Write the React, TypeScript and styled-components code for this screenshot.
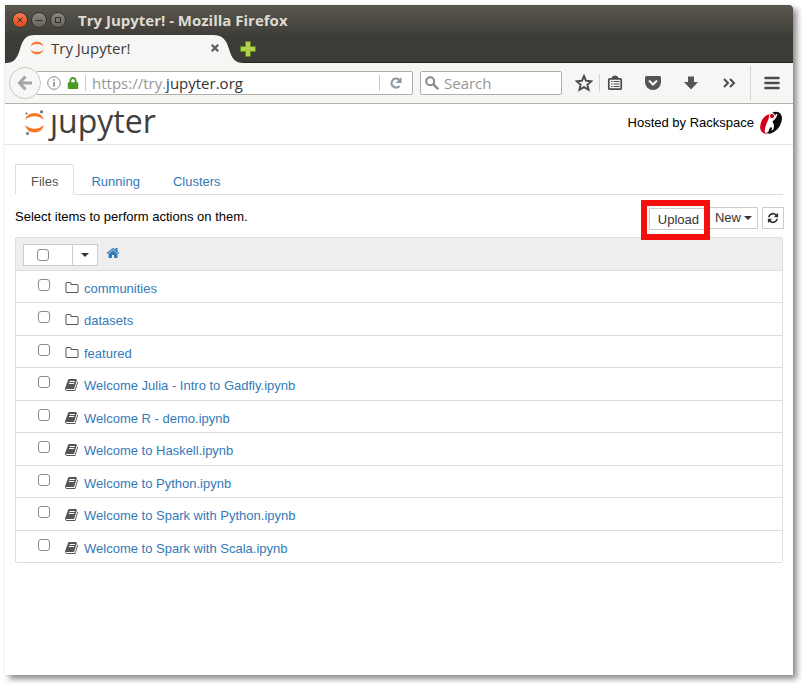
import React from "react";
import styled, { createGlobalStyle, css } from "styled-components";
import { FaLock } from "react-icons/fa";

const uiFont = `"Open Sans", "Noto Sans", sans-serif`;
const pageFont = `"Liberation Sans", Arial, sans-serif`;

const Global = createGlobalStyle`
  * { box-sizing: border-box; }
  body { margin: 0; background: #fff; font: 13px/20px ${pageFont}; color: #000; }
  button, input { font: inherit; color: inherit; margin: 0; }
  button { cursor: pointer; }
  a { color: #337ab7; text-decoration: none; }
  svg { display: block; flex: none; }
`;

const Screen = styled.div`
  min-height: 100vh;
  padding: 5px 9px 9px 5px;
  display: flex;
`;
const Window = styled.div`
  flex: 1;
  min-width: 0;
  background: #fff;
  box-shadow: 4px 4px 6px rgba(0, 0, 0, 0.45), 0 0 1px rgba(0, 0, 0, 0.15);
`;
const TitleBar = styled.header`
  height: 30px;
  display: flex;
  align-items: center;
  padding: 0 7px;
  gap: 3px;
  background: linear-gradient(#5a574e, #3f3e39);
  border-radius: 0 4px 0 0;
  font: 700 14px/20px ${uiFont};
  color: #dfdbd2;
`;
const WindowButton = styled.button<{ $close?: boolean }>`
  width: 16px;
  height: 16px;
  padding: 0;
  display: grid;
  place-items: center;
  border-radius: 50%;
  border: 1px solid #35342f;
  background: ${(p) => (p.$close ? "linear-gradient(#f37b53, #dd4a1c)" : "linear-gradient(#8b887e, #66645b)")};
  color: #3b2a22;
`;
const WindowTitle = styled.span`
  margin-left: 9px;
  font-size: 15px;
`;
const TabStrip = styled.div`
  height: 28px;
  display: flex;
  align-items: stretch;
  background: #3c3b37;
  box-shadow: inset 0 -1px #24231f;
`;
const BrowserTab = styled.div`
  width: 230px;
  display: grid;
  grid-template-columns: 100%;
  height: 28px;
  font: 15px/20px ${uiFont};
  color: #3c3c3c;
  > * { grid-area: 1 / 1; }
`;
const TabContent = styled.div`
  display: flex;
  align-items: center;
  padding: 0 16px 2px 25px;
  gap: 7px;
`;
const IconButton = styled.button`
  padding: 0;
  border: 0;
  background: none;
  display: grid;
  place-items: center;
`;
const Spacer = styled.span`
  flex: 1;
`;
const NewTab = styled(IconButton)`
  margin-left: 3px;
  width: 20px;
`;
const NavBar = styled.nav`
  height: 41px;
  display: flex;
  align-items: center;
  padding: 0 11px 0 4px;
  background: #f6f6f4;
  border-bottom: 1px solid #b0b0ad;
  color: #4c4c4c;
`;
const BackButton = styled(IconButton)`
  width: 32px;
  height: 32px;
  z-index: 1;
  border: 1px solid #c9c9c6;
  border-radius: 50%;
  background: #f7f7f5;
  color: #a5a5a5;
`;
const field = css`
  height: 24px;
  display: flex;
  align-items: center;
  background: #fff;
  border: 1px solid #b0aea8;
  border-radius: 2px;
  font: 15px/20px ${uiFont};
`;
const AddressBar = styled.div`
  ${field}
  flex: 1;
  margin: 0 7px 0 -5px;
  padding: 0 9px 0 10px;
  gap: 6px;
`;
const AddressDivider = styled.span`
  width: 1px;
  height: 16px;
  background: #c8c8c8;
`;
const Address = styled.span`
  color: #969696;
  flex: 1;
  b { font-weight: 400; color: #333; }
`;
const SearchBar = styled.label`
  ${field}
  width: 142px;
  margin-right: 12px;
  padding-left: 4px;
  gap: 5px;
  color: #8a8a8a;
`;
const SearchInput = styled.input`
  width: 100%;
  min-width: 0;
  border: 0;
  padding: 0;
  background: none;
  &::placeholder { color: #969696; opacity: 1; }
`;
const ReloadButton = styled(IconButton)`
  padding-left: 3px;
`;
const ToolGroup = styled.div`
  display: flex;
  align-items: center;
  gap: 18px;
`;
const ToolButton = styled(IconButton)`
  width: 20px;
  height: 20px;
`;
const ToolDivider = styled.span<{ $tall?: boolean }>`
  width: 1px;
  height: ${(p) => (p.$tall ? 34 : 18)}px;
  margin: ${(p) => (p.$tall ? "0 11px" : "0 5px")};
  background: #d4d4d2;
`;
const PageHeader = styled.header`
  height: 41px;
  display: flex;
  justify-content: space-between;
  padding: 0 10px 0 18px;
  border-bottom: 1px solid #e4e4e4;
`;
const Brand = styled.a`
  display: flex;
  align-items: flex-start;
  padding-top: 5px;
  gap: 5px;
  color: #404040;
  font: 500 32px/24px ${uiFont};
`;
const Hosted = styled.div`
  display: flex;
  align-items: center;
  padding-bottom: 3px;
  gap: 5px;
`;
const Main = styled.main`
  padding: 19px 10px 0;
`;
const Tabs = styled.div`
  display: flex;
  gap: 1px;
  border-bottom: 1px solid #ddd;
`;
const Tab = styled.button<{ $active?: boolean }>`
  height: 31px;
  margin-bottom: -1px;
  padding: 4px 15px 0;
  border: 1px solid;
  border-color: ${(p) => (p.$active ? "#ddd #ddd #fff" : "transparent")};
  border-radius: 2px 2px 0 0;
  background: ${(p) => (p.$active ? "#fff" : "none")};
  color: ${(p) => (p.$active ? "#555" : "#337ab7")};
`;
const Actions = styled.div`
  display: flex;
  align-items: center;
  height: 42px;
  padding-top: 4px;
  margin-right: -1px;
`;
const ActionText = styled.span`
  flex: 1;
  padding-bottom: 2px;
`;
const SmallButton = styled.button`
  height: 22px;
  padding: 0 5px;
  display: flex;
  align-items: center;
  gap: 3px;
  background: #fff;
  border: 1px solid #ccc;
  color: #333;
`;
const Highlight = styled.div`
  z-index: 1;
  border: 6px solid #f50f0f;
  padding: 2px 0 4px 2px;
  margin: 4px 0 0;
  ${SmallButton} { padding: 2px 5px 0 8px; border-right: 0; }
`;
const NewButton = styled(SmallButton)`
  border-left: 0;
  margin-right: 4px;
`;
const RefreshButton = styled(SmallButton)`
  padding: 0 4px;
`;
const FileList = styled.ul`
  list-style: none;
  margin: 0;
  padding: 0;
  border: 1px solid #ddd;
  border-radius: 2px;
`;
const ListHeader = styled.li`
  height: 32px;
  display: flex;
  align-items: center;
  padding: 2px 7px 0;
  background: #eee;
  > a { margin-bottom: 4px; }
`;
const Selector = styled.div`
  display: flex;
  height: 22px;
  margin-right: 8px;
  border: 1px solid #ccc;
  background: #fff;
`;
const SelectAll = styled.label`
  width: 48px;
  display: grid;
  place-items: center;
  padding-right: 10px;
`;
const SelectMenu = styled(IconButton)`
  width: 25px;
  border-left: 1px solid #ccc;
  color: #333;
`;
const Check = styled.input`
  appearance: none;
  width: 12px;
  height: 12px;
  border: 1px solid #8f8b85;
  border-radius: 3px;
  background: #fff;
`;
const FileRow = styled.li`
  display: grid;
  grid-template-columns: 12px 14px 1fr;
  align-items: center;
  height: 33px;
  padding: 4px 22px 0;
  border-top: 1px solid #ddd;
  color: #555;
  &:nth-child(even) { height: 32px; }
  ${Check} { margin-bottom: 8px; }
  > svg { margin: 0 0 2px 15px; }
  > a { margin-left: 20px; }
`;

const glyphs = {
  book: "M1639 478q40 57 18 129l-275 906q-19 64-76.5 107.5t-122.500 43.500h-923q-77 0-148.500-53.500t-99.500-131.500q-24-67-2-127 0-4 3-27t4-37q1-8-3-21.500t-3-19.500q2-11 8-21t16.500-23.500 16.500-23.500q23-38 45-91.500t30-91.500q3-10 .5-30t-.5-28q3-11 17-28t17-23q21-36 42-92t25-90q1-9-2.500-32t.5-28q4-13 22-30.500t22-22.500q19-26 42.500-84.500t27.500-96.500q1-8-3-25.500t-2-26.500q2-8 9-18t18-23 17-21q8-12 16.500-30.500t15-35 16-36 19.500-32 26.500-23.500 36-11.500 47.500 5.500l-1 3q38-9 51-9h761q74 0 114 56t18 130l-274 906q-36 119-71.500 153.500t-128.500 34.500h-869q-27 0-38 15-11 16-1 43 24 70 144 70h923q29 0 56-15.500t35-41.500l300-987q7-22 5-57 38 15 59 43zm-1064 2q-4 13 2 22.500t20 9.500h608q13 0 25.500-9.500t16.500-22.500l21-64q4-13-2-22.500t-20-9.500h-608q-13 0-25.500 9.500t-16.500 22.500zm-83 256q-4 13 2 22.500t20 9.500h608q13 0 25.500-9.500t16.500-22.500l21-64q4-13-2-22.500t-20-9.500h-608q-13 0-25.500 9.500t-16.500 22.500z",
  folder: "M1600 1312v-704q0-40-28-68t-68-28h-704q-40 0-68-28t-28-68v-64q0-40-28-68t-68-28h-320q-40 0-68 28t-28 68v960q0 40 28 68t68 28h1216q40 0 68-28t28-68zm128-704v704q0 92-66 158t-158 66h-1216q-92 0-158-66t-66-158v-960q0-92 66-158t158-66h320q92 0 158 66t66 158v32h672q92 0 158 66t66 158z",
  home: "M1472 992v480q0 26-19 45t-45 19h-384v-384h-256v384h-384q-26 0-45-19t-19-45v-480q0-1 .5-3t.5-3l575-474 575 474q1 2 1 6zm223-69l-62 74q-8 9-21 11h-3q-13 0-21-7l-692-577-692 577q-12 8-24 7-13-2-21-11l-62-74q-8-10-7-23.500t11-21.500l719-599q32-26 76-26t76 26l244 204v-195q0-14 9-23t23-9h192q14 0 23 9t9 23v408l219 182q10 8 11 21.500t-7 23.500z",
  refresh: "M1639 1056q0 5-1 7-64 268-268 434.500t-478 166.500q-146 0-282.500-55t-243.500-157l-129 129q-19 19-45 19t-45-19-19-45v-448q0-26 19-45t45-19h448q26 0 45 19t19 45-19 45l-137 137q71 66 161 102t187 36q134 0 250-65t186-179q11-17 53-117 8-23 30-23h192q13 0 22.500 9.500t9.500 22.500zm25-800v448q0 26-19 45t-45 19h-448q-26 0-45-19t-19-45 19-45l138-138q-148-137-349-137-134 0-250 65t-186 179q-11 17-53 117-8 23-30 23h-199q-13 0-22.500-9.500t-9.500-22.500v-7q65-268 270-434.500t480-166.500q146 0 284 55.500t245 156.500l130-129q19-19 45-19t45 19 19 45z",
};

const Glyph = ({ name, size = 14 }: { name: keyof typeof glyphs; size?: number }) => (
  <svg width={size} height={size} viewBox="0 0 1792 1792" fill="currentColor"><path d={glyphs[name]} /></svg>
);

const Caret = () => (
  <svg width="8" height="4" viewBox="0 0 8 4" fill="currentColor"><path d="M0 0h8L4 4z" /></svg>
);

const Moons = () => (
  <svg width="14" height="14" viewBox="0 0 14 14" fill="#f37726">
    <path d="M0.6 5.2Q2.2 .8 7 .8t6.4 4.4Q11 3 7 3T.6 5.2Z" />
    <path d="M0.6 8.8Q2.2 13.2 7 13.2t6.4-4.4Q11 11 7 11T.6 8.8Z" />
  </svg>
);

const files: { name: string; folder?: boolean }[] = [
  { name: "communities", folder: true },
  { name: "datasets", folder: true },
  { name: "featured", folder: true },
  { name: "Welcome Julia - Intro to Gadfly.ipynb" },
  { name: "Welcome R - demo.ipynb" },
  { name: "Welcome to Haskell.ipynb" },
  { name: "Welcome to Python.ipynb" },
  { name: "Welcome to Spark with Python.ipynb" },
  { name: "Welcome to Spark with Scala.ipynb" },
];

export default function App() {
  return (
    <Screen>
      <Global />
      <Window>
        <TitleBar>
          <WindowButton $close aria-label="Close window">
            <svg width="8" height="8" viewBox="0 0 8 8" stroke="currentColor"><path d="M1.5 1.5l5 5M6.5 1.5l-5 5" /></svg>
          </WindowButton>
          <WindowButton aria-label="Minimize">
            <svg width="8" height="8" viewBox="0 0 8 8" stroke="currentColor"><path d="M.5 4.5h7" /></svg>
          </WindowButton>
          <WindowButton aria-label="Maximize">
            <svg width="8" height="8" viewBox="0 0 8 8" stroke="currentColor" fill="none"><path d="M1.5 1.5h5v5h-5z" /></svg>
          </WindowButton>
          <WindowTitle>Try Jupyter! - Mozilla Firefox</WindowTitle>
        </TitleBar>
        <TabStrip>
          <BrowserTab>
            <svg width="240" height="28" viewBox="0 0 240 28">
              <path d="M0 28C9 28 12 24 15 14C18 4 21 0 30 0H208C217 0 221 4 224 14C227 24 230 28 239 28Z" fill="#f6f6f4" />
            </svg>
            <TabContent>
              <Moons />
              <span>Try Jupyter!</span>
              <Spacer />
              <IconButton aria-label="Close tab">
                <svg width="8" height="8" viewBox="0 0 8 8" stroke="#5b5b5b" strokeWidth="2.2"><path d="M.8.8l6.4 6.4M7.2.8L.8 7.2" /></svg>
              </IconButton>
            </TabContent>
          </BrowserTab>
          <NewTab aria-label="New tab">
            <svg width="16" height="16" viewBox="0 0 16 16"><path d="M5.5.5h5v5h5v5h-5v5h-5v-5h-5v-5h5z" fill="#b5d04c" stroke="#5c8a1c" /></svg>
          </NewTab>
        </TabStrip>
        <NavBar>
          <BackButton aria-label="Back">
            <svg width="16" height="16" viewBox="0 0 16 16" fill="none" stroke="currentColor" strokeWidth="3"><path d="M15 8H3M8.5 1.5L2.5 8l6 6.5" /></svg>
          </BackButton>
          <AddressBar>
            <svg width="14" height="14" viewBox="0 0 14 14" fill="none" stroke="#8a8a8a"><circle cx="7" cy="7" r="6.3" /><path d="M7 6v4.6M7 3.2v1.6" strokeWidth="1.6" /></svg>
            <FaLock size={12} color="#4b9a22" />
            <AddressDivider />
            <Address>https://try.<b>jupyter.org</b></Address>
            <AddressDivider />
            <ReloadButton aria-label="Reload">
              <svg width="14" height="14" viewBox="0 0 14 14"><path d="M10.5 10A4.5 4.5 0 1 1 10 3.6" fill="none" stroke="#8e98a5" strokeWidth="2.2" /><path d="M12.5 1v6h-6z" fill="#8e98a5" /></svg>
            </ReloadButton>
          </AddressBar>
          <SearchBar>
            <svg width="14" height="14" viewBox="0 0 14 14" fill="none" stroke="currentColor"><circle cx="5.2" cy="5.2" r="4" strokeWidth="2" /><path d="M8.2 8.2l5 5" strokeWidth="2.4" /></svg>
            <SearchInput placeholder="Search" aria-label="Search" />
          </SearchBar>
          <ToolButton aria-label="Bookmark">
            <svg width="18" height="18" viewBox="0 0 18 18" fill="none" stroke="currentColor" strokeWidth="1.9"><path d="M9 2l2.1 4.8 5.2.5-3.9 3.5 1.2 5.1L9 13.2l-4.6 2.7 1.2-5.1L1.7 7.3l5.2-.5z" /></svg>
          </ToolButton>
          <ToolDivider />
          <ToolGroup>
            <ToolButton aria-label="Bookmarks menu">
              <svg width="16" height="16" viewBox="0 0 16 16" fill="none" stroke="currentColor"><rect x="1.8" y="3.8" width="12.4" height="10.4" rx="1" strokeWidth="1.7" /><path d="M5 3.5Q5 1 8 1t3 2.5z" fill="currentColor" /><path d="M4 6.5h1.5M4 9h1.5M4 11.5h1.5M6.5 6.5h6M6.5 9h6M6.5 11.5h6" strokeWidth="1.2" /></svg>
            </ToolButton>
            <ToolButton aria-label="Pocket">
              <svg width="16" height="16" viewBox="0 0 16 16"><path d="M1.5 1h13Q16 1 16 2.5V7a8 8 0 0 1-16 0V2.5Q0 1 1.5 1Z" fill="#555" /><path d="M4 5.5l4 4 4-4" fill="none" stroke="#f6f6f4" strokeWidth="2" /></svg>
            </ToolButton>
            <ToolButton aria-label="Downloads">
              <svg width="14" height="14" viewBox="0 0 14 14"><path d="M4 .5h6V6h4L7 13.5 0 6h4z" fill="#555" /></svg>
            </ToolButton>
            <ToolButton aria-label="More tools">
              <svg width="13" height="10" viewBox="0 0 13 10" fill="none" stroke="currentColor" strokeWidth="2"><path d="M1 1l4 4-4 4M7 1l4 4-4 4" /></svg>
            </ToolButton>
          </ToolGroup>
          <ToolDivider $tall />
          <ToolButton aria-label="Menu">
            <svg width="16" height="14" viewBox="0 0 16 14" stroke="currentColor" strokeWidth="2.6" strokeLinecap="round"><path d="M1.5 2h13M1.5 7h13M1.5 12h13" /></svg>
          </ToolButton>
        </NavBar>

        <PageHeader>
          <Brand href="#" aria-label="jupyter">
            <svg width="22" height="28" viewBox="0 0 22 28">
              <path d="M2 11Q4 4 11.5 4T21 11Q17 7.3 11.5 7.3T2 11ZM2 16Q4 23.500 11.500 23.500T21 16Q17 19.700 11.500 19.700T2 16Z" fill="#f37726" />
              <circle cx="18.5" cy="2.8" r="1.5" fill="#666" /><circle cx="3.5" cy="4.5" r="1" fill="#666" /><circle cx="4.5" cy="24.5" r="1.7" fill="#8a8a8a" />
            </svg>
            <span>ȷupyter</span>
          </Brand>
          <Hosted>
            <span>Hosted by Rackspace</span>
            <svg width="24" height="24" viewBox="0 0 24 24">
              <path d="M12.5 2.5Q5 4 2.5 10Q-.5 18 3 21Q5.500 23.500 8 22.500L6.500 20Q5.500 17 8 12L11 7Z" fill="#d0021b" />
              <path d="M13.500 1.500Q17 0 20 1.500Q24 4 22.500 10.500Q20 20 11 22.800L7 22Q6 17 9 11.500L11 8Z" fill="#0a0a0a" />
              <path d="M10.500 4.500L9.500 8L7.500 13L5.500 20L7 22.500L9.500 20.500L11 16.500L13 16.500L12.500 20L14.500 18L15 14L13.500 10.500L17 7L18.500 3L17 3L15.500 6L13.500 8Z" fill="#fff" />
              <circle cx="13" cy="5" r="2.6" fill="#d0021b" stroke="#fff" />
            </svg>
          </Hosted>
        </PageHeader>

        <Main>
          <Tabs role="tablist">
            <Tab $active role="tab" aria-selected="true">Files</Tab>
            <Tab role="tab" aria-selected="false">Running</Tab>
            <Tab role="tab" aria-selected="false">Clusters</Tab>
          </Tabs>
          <Actions>
            <ActionText>Select items to perform actions on them.</ActionText>
            <Highlight><SmallButton>Upload</SmallButton></Highlight>
            <NewButton>New <Caret /></NewButton>
            <RefreshButton aria-label="Refresh"><Glyph name="refresh" size={12} /></RefreshButton>
          </Actions>
          <FileList>
            <ListHeader>
              <Selector>
                <SelectAll><Check type="checkbox" aria-label="Select all" /></SelectAll>
                <SelectMenu aria-label="Selection menu"><Caret /></SelectMenu>
              </Selector>
              <a href="#" aria-label="Home"><Glyph name="home" /></a>
            </ListHeader>
            {files.map((f) => (
              <FileRow key={f.name}>
                <Check type="checkbox" aria-label={f.name} />
                <Glyph name={f.folder ? "folder" : "book"} />
                <a href="#">{f.name}</a>
              </FileRow>
            ))}
          </FileList>
        </Main>
      </Window>
    </Screen>
  );
}
